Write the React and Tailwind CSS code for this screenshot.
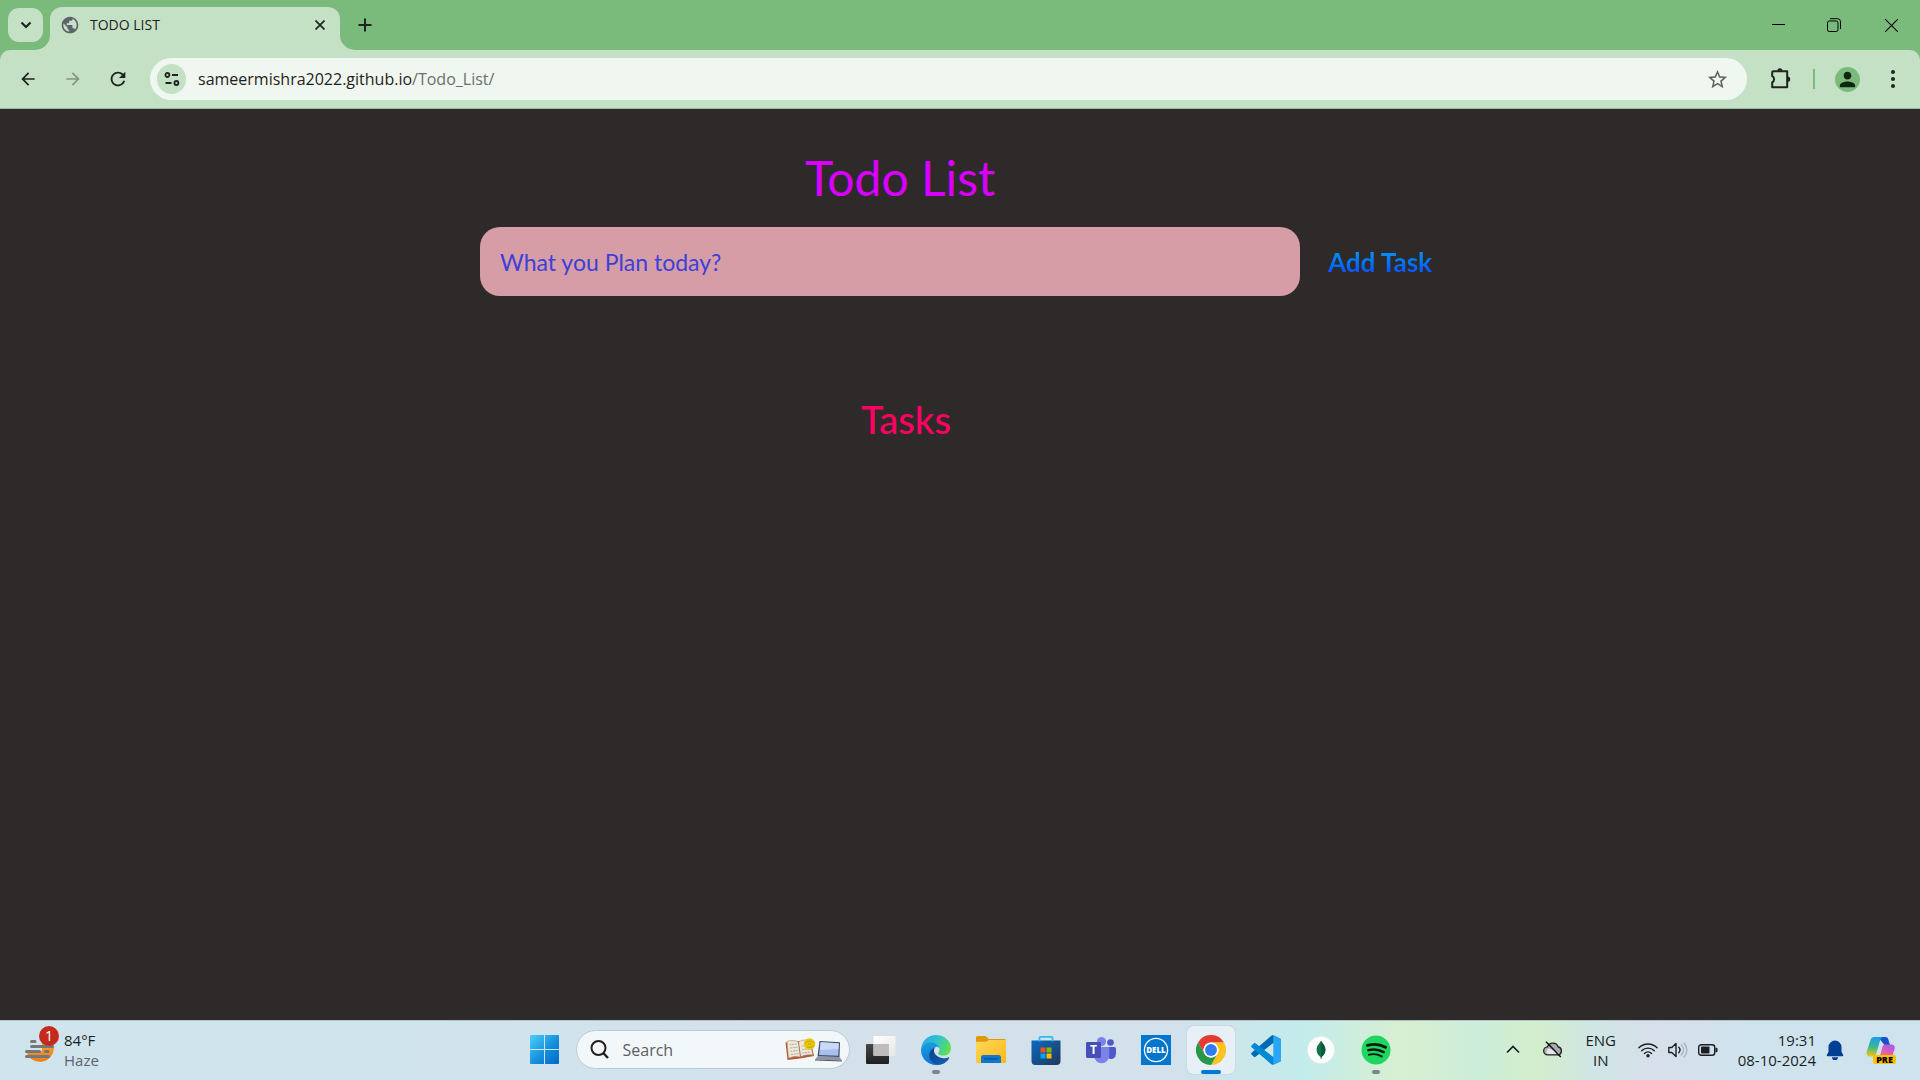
import React, { useState } from "react";
import { MdArrowBack, MdArrowForward, MdRefresh, MdPublic, MdPerson, MdStarBorder } from "react-icons/md";

const ui = "font-['Open_Sans','Noto_Sans',sans-serif]";

function TabCurve({ flip }) {
  return (
    <svg width="15" height="15" viewBox="0 0 15 15" className={flip ? "-scale-x-100 self-end" : "self-end"} aria-hidden="true">
      <path d="M0 15A15 15 0 0 0 15 0V15Z" fill="#c5e1c5" />
    </svg>
  );
}

function TabStrip() {
  return (
    <div className="flex h-[50px] items-stretch bg-[#7abb7c]">
      <button aria-label="Search tabs" className="mt-2 ml-2 flex h-[34px] w-[35px] items-center justify-center rounded-[11px] bg-[#c5e1c5]">
        <svg width="12" height="8" viewBox="0 0 12 8" fill="none" stroke="#1f2320" strokeWidth="2.2">
          <path d="M1.5 1.5 6 6l4.5-4.5" />
        </svg>
      </button>
      <div className="-ml-2 flex">
        <TabCurve />
        <div className="mt-[7px] flex w-[290px] items-center rounded-t-xl bg-[#c5e1c5] pr-2.5 pb-[7px] pl-2.5">
          <MdPublic size={20} color="#5d6368" />
          <span className="ml-2.5 flex-1 text-sm text-[#202124]">TODO LIST</span>
          <button aria-label="Close tab" className="flex h-5 w-5 items-center justify-center">
            <svg width="10" height="10" viewBox="0 0 10 10" stroke="#1f2320" strokeWidth="1.7">
              <path d="M.5.5l9 9M9.5.5l-9 9" />
            </svg>
          </button>
        </div>
        <TabCurve flip />
      </div>
      <button aria-label="New tab" className="flex w-5 items-center justify-center">
        <svg width="14" height="14" viewBox="0 0 14 14" stroke="#1f2320" strokeWidth="2">
          <path d="M7 .5v13M.5 7h13" />
        </svg>
      </button>
      <div className="ml-auto flex">
        <button aria-label="Minimize" className="flex w-14 items-center justify-center">
          <svg width="13" height="13" viewBox="0 0 13 13" stroke="#000" strokeWidth="1">
            <path d="M0 5.5h13" />
          </svg>
        </button>
        <button aria-label="Restore" className="flex w-14 items-center justify-center">
          <svg width="14" height="14" viewBox="0 0 14 14" fill="none" stroke="#000" strokeWidth="1">
            <rect x="0.5" y="3" width="10.5" height="10.5" rx="1.8" />
            <path d="M3 .7h7.5a3 3 0 0 1 3 3V11" />
          </svg>
        </button>
        <button aria-label="Close" className="flex w-[58px] items-center justify-center">
          <svg width="13" height="13" viewBox="0 0 13 13" stroke="#000" strokeWidth="1.1">
            <path d="M0 0l13 13M13 0 0 13" />
          </svg>
        </button>
      </div>
    </div>
  );
}

function Toolbar() {
  return (
    <div className="bg-[#7abb7c]">
      <div className="flex h-[59px] items-center rounded-t-[10px] border-b border-[#9db89d] bg-[#c5e1c5] pr-[17px] pl-[9px]">
        <button aria-label="Back" className="flex w-[37px] justify-center text-[#1f2320]"><MdArrowBack size={20} /></button>
        <button aria-label="Forward" className="ml-2 flex w-[37px] justify-center text-[#839784]"><MdArrowForward size={20} /></button>
        <button aria-label="Reload" className="ml-2 flex w-[37px] justify-center text-[#1f2320]"><MdRefresh size={22} /></button>
        <div className="ml-3.5 flex h-[42px] flex-1 items-center rounded-full bg-[#f0f7f0] pr-[18px] pl-[7px]">
          <button aria-label="Site information" className="flex h-[30px] w-[29px] shrink-0 items-center justify-center rounded-full bg-[#c5e1c5]">
            <svg width="16" height="14" viewBox="0 0 16 14" fill="none" stroke="#1f2320" strokeWidth="1.8">
              <circle cx="3.4" cy="3" r="2" />
              <path d="M8 3h6M1.5 11h6" />
              <circle cx="12.4" cy="11" r="2" />
            </svg>
          </button>
          <div className="ml-3 flex-1 text-base text-[#1f2320]">
            sameermishra2022.github.io<span className="text-[#6a706b]">/Todo_List/</span>
          </div>
          <button aria-label="Bookmark this tab" className="text-[#5c625d]"><MdStarBorder size={23} /></button>
        </div>
        <button aria-label="Extensions" className="ml-[23px]">
          <svg width="22" height="22" viewBox="0 0 22 22" aria-hidden="true">
            <path d="M3.2 3.2H17.2V19.2H2.2V14.3A3.4 3.4 0 0 0 2.2 8.2V4.2a1 1 0 0 1 1-1Z" fill="none" stroke="#1f2320" strokeWidth="2" strokeLinejoin="round" />
            <path d="M7.3 2.8a2.6 2.6 0 0 1 5.2 0ZM17.6 8.6a2.6 2.6 0 0 1 0 5.2Z" fill="#1f2320" />
          </svg>
        </button>
        <span className="ml-[21px] h-5 w-0.5 bg-[#7abb7c]" />
        <button aria-label="Profile" className="ml-5 flex h-[25px] w-[25px] items-center justify-center rounded-full bg-[#7abb7c] text-[#10250f]">
          <MdPerson size={23} />
        </button>
        <button aria-label="Menu" className="ml-[22px] flex w-[21px] justify-center">
          <svg width="4" height="18" viewBox="0 0 4 18" fill="#1f2320">
            <circle cx="2" cy="2" r="2" />
            <circle cx="2" cy="9" r="2" />
            <circle cx="2" cy="16" r="2" />
          </svg>
        </button>
      </div>
    </div>
  );
}

function TodoPage() {
  const [task, setTask] = useState("");
  return (
    <main className="flex-1 bg-[#2f2a2a] font-['Lato',sans-serif]">
      <div className="mx-auto w-1/2 pt-9">
        <h1 className="pr-[120px] text-center text-5xl leading-[66px] text-[#da00ff]">Todo List</h1>
        <form className="mt-4 flex items-center" onSubmit={(e) => e.preventDefault()}>
          <input
            aria-label="New task"
            value={task}
            onChange={(e) => setTask(e.target.value)}
            placeholder="What you Plan today?"
            className="h-[69px] min-w-0 flex-1 rounded-[20px] bg-[#d69da7] px-5 text-[23px] text-[#3c40d8] outline-none placeholder:text-[#3c40d8]"
          />
          <button type="submit" className="ml-7 bg-linear-to-b from-[#1a9ff5] to-[#1a3cff] bg-clip-text pr-2 text-[26px] leading-8 font-bold text-transparent">
            Add Task
          </button>
        </form>
        <h2 className="mt-[97px] pr-[108px] text-center text-[38px] leading-[52px] font-medium text-[#ff0062]">Tasks</h2>
      </div>
    </main>
  );
}

function TaskButton({ label, active, open, children }) {
  return (
    <button
      aria-label={label}
      className={
        active
          ? "relative flex h-12 w-12 items-center justify-center rounded-md bg-[#e8f0f7] shadow-[0_0_1px_#8899aa]"
          : "relative flex h-12 w-12 items-center justify-center"
      }
    >
      {children}
      {active && <span className="absolute bottom-0 left-3.5 h-1 w-5 rounded-full bg-[#0078d4]" />}
      {open && <span className="absolute bottom-0 left-5 h-1 w-2 rounded-full bg-[#7f8489]" />}
    </button>
  );
}

const TaskViewIcon = () => (
  <svg width="30" height="30" viewBox="0 0 30 30">
    <defs>
      <linearGradient id="tv" x1="0" y1="0" x2="0" y2="1"><stop stopColor="#474747" /><stop offset="1" stopColor="#1f1f1f" /></linearGradient>
      <linearGradient id="tw" x1="0" y1="0" x2="1" y2="1"><stop stopColor="#fff" /><stop offset="1" stopColor="#e4e6e8" /></linearGradient>
    </defs>
    <rect x="0" y="9" width="23" height="20" rx="1" fill="url(#tv)" />
    <rect x="7.5" y="1" width="22" height="20" rx="1" fill="url(#tw)" />
    <path d="M7.5 9H23V21H8.5a1 1 0 0 1-1-1Z" fill="#bdbdbd" />
  </svg>
);

const EdgeIcon = () => (
  <svg width="30" height="30" viewBox="0 0 30 30">
    <defs>
      <linearGradient id="ea" x1="0" y1=".2" x2="1" y2=".6"><stop stopColor="#2aa6e8" /><stop offset=".5" stopColor="#2fc5cb" /><stop offset="1" stopColor="#62e04c" /></linearGradient>
      <linearGradient id="eb" x1=".3" y1="0" x2=".5" y2="1"><stop stopColor="#1b9de2" /><stop offset="1" stopColor="#0a72d3" /></linearGradient>
      <linearGradient id="ec" x1="0" y1="0" x2="1" y2="1"><stop stopColor="#0d3f86" /><stop offset="1" stopColor="#1263b8" /></linearGradient>
    </defs>
    <path d="M.2 13.5C1 5.7 7.200 0 15 0c8.500 0 15 6.200 15 13 0 4.500-3.400 7.600-7.600 7.600-3.300 0-5.200-1-5.200-2.200 0-.9 1.300-1.600 1.300-3.800 0-3.400-3.400-6.600-8.500-6.600C5.300 8 1.800 10.300.2 13.500Z" fill="url(#ea)" />
    <path d="M.2 13.500C1.800 9.700 5.500 7.600 9.800 7.600c4.500 0 8 2.400 8.700 6-1-1.700-2.300-2.100-3.600-1.600-3 1.300-5 5-3.600 9.500 1.200 4 4.500 6.800 8.600 7.500C11 32.400 0 26 0 15Z" fill="url(#eb)" />
    <path d="M14.400 12.300C11.200 14 9 15.500 8.400 18.500 7.500 23 10.500 28.700 17 29.800c5 .1 9.200-3 11.200-6.900.3-.6-.2-.9-.7-.7-1.300.7-2.700 1-4.500 1-5.700 0-10-3.600-10-7.600 0-1.400.4-2.500 1.400-3.300Z" fill="url(#ec)" />
  </svg>
);

const FolderIcon = () => (
  <svg width="30" height="27" viewBox="0 0 30 27">
    <defs>
      <linearGradient id="fo" x1="0" y1="0" x2="1" y2="1"><stop stopColor="#ffd75e" /><stop offset="1" stopColor="#fcb912" /></linearGradient>
    </defs>
    <path d="M0 1.500A1.500 1.500 0 0 1 1.500 0h8l3.500 3h15.500A1.500 1.500 0 0 1 30 4.500V10H0Z" fill="#dd9a0b" />
    <path d="M0 5.800h10L13 4h17v21.500a1.500 1.500 0 0 1-1.500 1.500h-27A1.500 1.500 0 0 1 0 25.500Z" fill="url(#fo)" />
    <path d="M5 27v-5.500A2.500 2.500 0 0 1 7.500 19h15a2.500 2.500 0 0 1 2.500 2.500V27Z" fill="#0f78cc" />
    <path d="M8.500 22.800h13" stroke="#0a4c8c" strokeWidth="1.2" strokeLinecap="round" />
  </svg>
);

const StoreIcon = () => (
  <svg width="30" height="30" viewBox="0 0 30 30">
    <defs>
      <linearGradient id="st" x1="0" y1="0" x2="1" y2="1"><stop stopColor="#0a6bbf" /><stop offset="1" stopColor="#22365c" /></linearGradient>
    </defs>
    <path d="M.5 5.500h29V26a4 4 0 0 1-4 4h-21a4 4 0 0 1-4-4Z" fill="url(#st)" />
    <path d="M8.500 6.500V2.800a1 1 0 0 1 1-1h11a1 1 0 0 1 1 1V6.500" fill="none" stroke="#2bbdf2" strokeWidth="1.8" />
    <path fill="#f25022" d="M9.500 12.500h5v5h-5z" />
    <path fill="#7fba00" d="M15.500 12.500h5v5h-5z" />
    <path fill="#00a4ef" d="M9.500 18.500h5v5h-5z" />
    <path fill="#ffb900" d="M15.500 18.500h5v5h-5z" />
  </svg>
);

const TeamsIcon = () => (
  <svg width="30" height="30" viewBox="0 0 30 30">
    <circle cx="24.500" cy="7.500" r="3.300" fill="#5059c9" />
    <path d="M21 12h7.500a1.500 1.500 0 0 1 1.500 1.500V19a5 5 0 0 1-8 4Z" fill="#5059c9" />
    <circle cx="15.500" cy="6.500" r="4.500" fill="#7b83eb" />
    <path d="M8 12h14a1.300 1.300 0 0 1 1.300 1.300V20.500a7.600 7.600 0 0 1-15.300 0Z" fill="#7b83eb" />
    <rect x="0" y="7" width="15" height="16" rx="1.400" fill="#464eb8" />
    <text x="7.500" y="19" textAnchor="middle" fontSize="12" fontWeight="700" fill="#fff" fontFamily="Open Sans, sans-serif">T</text>
  </svg>
);

const DellIcon = () => (
  <svg width="30" height="30" viewBox="0 0 30 30">
    <rect width="30" height="30" fill="#0076ce" />
    <circle cx="15" cy="15" r="11.600" fill="none" stroke="#fff" strokeWidth="1.3" />
    <text x="15" y="17.800" textAnchor="middle" fontSize="8" fontWeight="800" fill="#fff" fontFamily="Open Sans, sans-serif">DELL</text>
  </svg>
);

const ChromeIcon = () => (
  <svg width="30" height="30" viewBox="0 0 48 48">
    <path d="M3.200 12A24 24 0 0 1 44.800 12L24 12A12 12 0 0 0 13.600 30Z" fill="#e33b2e" />
    <path d="M44.800 12A24 24 0 0 1 24 48L34.400 30A12 12 0 0 0 24 12Z" fill="#fcc31e" />
    <path d="M24 48A24 24 0 0 1 3.200 12L13.600 30A12 12 0 0 0 34.400 30Z" fill="#269848" />
    <circle cx="24" cy="24" r="12" fill="#fff" />
    <circle cx="24" cy="24" r="9.500" fill="#2f7df0" />
  </svg>
);

const CodeIcon = () => (
  <svg width="30" height="30" viewBox="0 0 30 30">
    <path d="M22 .3 29 3.400a1.700 1.700 0 0 1 1 1.600L21.600 8.600 4.500 21.800a1.200 1.200 0 0 1-1.600-.1L.6 19.600a1.200 1.200 0 0 1 0-1.800L20.300.7A1.700 1.700 0 0 1 22 .3Z" fill="#0069b4" />
    <path d="M22 29.700 29 26.600a1.700 1.700 0 0 0 1-1.600L21.600 21.400 4.500 8.200a1.200 1.200 0 0 0-1.600.1L.6 10.400a1.200 1.200 0 0 0 0 1.800L20.300 29.300A1.700 1.700 0 0 0 22 29.700Z" fill="#0089d4" />
    <path d="M22 29.700c.8.300 7-3 7-3a1.700 1.700 0 0 0 1-1.600V5a1.700 1.700 0 0 0-1-1.600S22.800 0 22 .3c-.5.2.3.3.3 1.300v26.800c0 1-.8 1.100-.3 1.300Z" fill="#29a7f2" />
  </svg>
);

const MongoIcon = () => (
  <svg width="28" height="28" viewBox="0 0 28 28">
    <circle cx="14" cy="14" r="13.700" fill="#fbfcfc" stroke="#dfe5e3" strokeWidth=".6" />
    <path d="M14 4.800c1.500 2.700 4.400 4.700 4.400 9 0 3.800-2.400 6-3.900 7.200L14.200 23h-.5L13.500 21C12 19.800 9.600 17.600 9.600 13.800c0-4.300 2.900-6.300 4.400-9Z" fill="#11734a" />
    <path d="M14 4.800c1.500 2.700 4.400 4.700 4.400 9 0 3.800-2.400 6-3.900 7.200L14.200 23H14Z" fill="#075a3a" />
  </svg>
);

const SpotifyIcon = () => (
  <svg width="30" height="30" viewBox="0 0 30 30" fill="none" strokeLinecap="round" stroke="#06180c">
    <circle cx="15" cy="15" r="14.500" fill="#1fd760" stroke="none" />
    <path d="M6.500 10.400c6-1.700 12.500-1.100 18 1.900" strokeWidth="2.900" />
    <path d="M7.300 15.200c5.200-1.400 10.600-.8 15.400 1.900" strokeWidth="2.400" />
    <path d="M7.900 19.700c4.400-1.100 8.700-.7 12.800 1.700" strokeWidth="1.9" />
  </svg>
);

const SearchArt = () => (
  <svg width="57" height="24" viewBox="0 0 57 24" aria-hidden="true">
    <path d="M.5 4.500 13 3l13 1.500L29 18l-14 2.500L2.500 22Z" fill="#b9552f" />
    <path d="M2 3.500C6 2 10 2 13.500 4 17 1.700 21 1.500 25 2.500L27.800 17c-5-.8-9 0-12.300 2-3-1-7.500-.8-12 1Z" fill="#efe8d8" stroke="#a29176" strokeWidth=".6" />
    <path d="M13.500 4 15.500 19" stroke="#8b7a60" strokeWidth="1" />
    <path d="M4.500 6.500 12 6M5 10l7.300-.7M5.300 13.300l7.500-.8M6 16.500l7.500-.9M16.500 8l6-.7M17 11.500l8-.8M17.400 15l8-.8" stroke="#aaa59b" strokeWidth=".9" strokeDasharray="2 .7" />
    <circle cx="24.500" cy="6" r="5.800" fill="#e8c80e" />
    <path d="M20.500 5.500c1.500-3 6-3 8-.5M22 9c2 1 5 .5 6.500-1.500M23 6h3" stroke="#c4a200" strokeWidth="1" fill="none" />
    <path d="M34.500 3 55 4.200 54.500 19 32.500 18.500Z" fill="#424a63" />
    <path d="M35.600 4.300 53.800 5.300 53.300 17.700 34 17Z" fill="#a9c0ef" />
    <path d="M35.600 4.300 53.800 5.300 53.500 11 35 12Z" fill="#c9d9f8" />
    <path d="M32.500 18.500 54.500 19 57 22.500 30 21.500Z" fill="#8f95a8" />
    <path d="M30 21.500 57 22.500V23.500L30 22.500Z" fill="#4f5466" />
  </svg>
);

function Taskbar() {
  return (
    <footer className="grid h-[60px] grid-cols-[1fr_auto_1fr] items-center border-t border-[#b5bfc6] bg-[linear-gradient(90deg,#d0e4ee_0%,#d0e4ee_22%,#d4e1eb_45%,#d2e1eb_61%,#c3ecec_68%,#d8efd0_73%,#ccedda_77%,#d3eecb_80%,#cfe6e6_83%,#d7dfea_86%,#cfe3ee_91%,#cfe3ee_100%)] pb-0.5 text-[15px] leading-5 text-[#1b1f22]">
      <button className="flex items-center justify-self-start pl-6 text-left">
        <span className="relative block h-10 w-10">
          <svg width="32" height="30" viewBox="0 0 32 30" className="mt-1" aria-hidden="true">
            <defs>
              <linearGradient id="sun" x1="0" y1="0" x2="0" y2="1"><stop stopColor="#f9b72c" /><stop offset="1" stopColor="#f07a1c" /></linearGradient>
            </defs>
            <path d="M2 14H17L18 0A14 14 0 1 1 2.500 18Z" fill="url(#sun)" />
            <path d="M0 0H18V17H0Z" fill="#d0e4ee" />
            <path d="M7.500 7.500h3.500M7.500 12.500h21M2.500 17.500h13M21.500 17.500h2.500M2.500 22.500h22" stroke="#75777a" strokeWidth="3" strokeLinecap="round" />
          </svg>
          <span className="absolute -top-1 left-[15px] flex h-5 w-5 items-center justify-center rounded-full bg-[#c42b1c] text-sm text-white">1</span>
        </span>
        <span>
          <span className="block">84°F</span>
          <span className="block text-[#5b6469]">Haze</span>
        </span>
      </button>

      <div className="flex items-center gap-[7px]">
        <TaskButton label="Start">
          <svg width="29" height="29" viewBox="0 0 29 29">
            <defs>
              <linearGradient id="win" gradientUnits="userSpaceOnUse" x1="0" y1="0" x2="29" y2="29"><stop stopColor="#4cd0fb" /><stop offset=".55" stopColor="#1590dd" /><stop offset="1" stopColor="#0067c8" /></linearGradient>
            </defs>
            <path d="M1 0h13v14H0V1a1 1 0 0 1 1-1ZM15 0h13a1 1 0 0 1 1 1v13H15ZM0 15h14v14H1a1 1 0 0 1-1-1ZM15 15h14v13a1 1 0 0 1-1 1H15Z" fill="url(#win)" />
          </svg>
        </TaskButton>
        <label className="flex h-[39px] w-[274px] items-center rounded-full border border-[#bccbd4] bg-[#f2f7fa] pr-[7px] pl-[13px]">
          <svg width="19" height="19" viewBox="0 0 19 19" fill="none" stroke="#202020" strokeWidth="2" className="shrink-0" aria-hidden="true">
            <circle cx="8.500" cy="8" r="7" />
            <path d="M13.500 13.200 18 18" strokeWidth="2.4" />
          </svg>
          <input aria-label="Search" placeholder="Search" className="ml-3.5 min-w-0 flex-1 bg-transparent text-base outline-none placeholder:text-[#5a6064]" />
          <SearchArt />
        </label>
        <TaskButton label="Task view"><TaskViewIcon /></TaskButton>
        <TaskButton label="Microsoft Edge" open><EdgeIcon /></TaskButton>
        <TaskButton label="File Explorer"><FolderIcon /></TaskButton>
        <TaskButton label="Microsoft Store"><StoreIcon /></TaskButton>
        <TaskButton label="Microsoft Teams"><TeamsIcon /></TaskButton>
        <TaskButton label="Dell"><DellIcon /></TaskButton>
        <TaskButton label="Google Chrome" active><ChromeIcon /></TaskButton>
        <TaskButton label="Visual Studio Code"><CodeIcon /></TaskButton>
        <TaskButton label="MongoDB Compass"><MongoIcon /></TaskButton>
        <TaskButton label="Spotify" open><SpotifyIcon /></TaskButton>
      </div>

      <div className="flex items-center justify-self-end pr-6">
        <button aria-label="Show hidden icons">
          <svg width="14" height="9" viewBox="0 0 14 9" fill="none" stroke="#1b1f22" strokeWidth="1.7"><path d="M1 7.500 7 1.500l6 6" /></svg>
        </button>
        <button aria-label="OneDrive" className="ml-[23px]">
          <svg width="20" height="17" viewBox="0 0 20 17">
            <path d="M4.800 13.800a4 4 0 0 1-.3-8A5.800 5.800 0 0 1 15.300 6a4 4 0 0 1 0 7.800Z" fill="#a9acae" stroke="#222" strokeWidth="1.3" />
            <path d="M4.800 13a3 3 0 0 1 1-5.500l5 1.500 6 3.500-1.500.6Z" fill="#e4e6e8" />
            <path d="M3 .8 17.800 16" stroke="#111" strokeWidth="1.5" />
          </svg>
        </button>
        <button className="ml-[22px] w-8 text-center">
          <span className="block">ENG</span>
          <span className="block">IN</span>
        </button>
        <button aria-label="Network, volume and battery" className="ml-[21px] flex items-center gap-2.5">
          <svg width="20" height="16" viewBox="0 0 20 16" fill="none" stroke="#1b1f22" strokeWidth="1.4" strokeLinecap="round">
            <path d="M.9 5.800a12.700 12.700 0 0 1 18.200 0M3.700 8.800a8.800 8.800 0 0 1 12.600 0M6.500 11.500a5 5 0 0 1 7 0" />
            <circle cx="10" cy="13.700" r="1.700" fill="#1b1f22" stroke="none" />
          </svg>
          <svg width="20" height="16" viewBox="0 0 20 16" fill="none" stroke="#1b1f22" strokeWidth="1.4" strokeLinecap="round">
            <path d="M.8 5.500h3L8 1.500v13l-4.200-4h-3Z" strokeLinejoin="round" />
            <path d="M10.800 5.300a4 4 0 0 1 0 5.400" />
            <path d="M13.400 3a7 7 0 0 1 0 10M16 1a10 10 0 0 1 0 14" stroke="#a9b6bd" />
          </svg>
          <svg width="20" height="12" viewBox="0 0 20 12">
            <rect x=".7" y=".7" width="16" height="10.600" rx="2.500" fill="none" stroke="#1b1f22" strokeWidth="1.4" />
            <rect x="3" y="2.500" width="8.500" height="7" rx=".8" fill="#1b1f22" />
            <path d="M17.500 3.800h1a1 1 0 0 1 1 1v2.400a1 1 0 0 1-1 1h-1Z" fill="#1b1f22" />
          </svg>
        </button>
        <button className="ml-5 text-right">
          <span className="block">19:31</span>
          <span className="block">08-10-2024</span>
        </button>
        <button aria-label="Notifications" className="ml-2.5">
          <svg width="18" height="20" viewBox="0 0 18 20" fill="#003f91">
            <path d="M9 .5a6.500 6.500 0 0 1 6.500 6.500v4.800L17.200 15a.8.8 0 0 1-.7 1.200h-15A.8.8 0 0 1 .8 15l1.700-3.200V7A6.500 6.500 0 0 1 9 .5ZM6 17.300h6a3 3 0 0 1-6 0Z" />
          </svg>
        </button>
        <button aria-label="Copilot preview" className="relative ml-[22px] h-7 w-[30px]">
          <svg width="30" height="26" viewBox="0 0 30 26">
            <defs>
              <linearGradient id="ca" x1=".3" y1="0" x2=".2" y2="1"><stop stopColor="#1a9df0" /><stop offset=".5" stopColor="#3fb889" /><stop offset="1" stopColor="#f2c80f" /></linearGradient>
              <linearGradient id="cb" x1=".8" y1="0" x2=".3" y2="1"><stop stopColor="#a35cf0" /><stop offset=".5" stopColor="#d95bc0" /><stop offset="1" stopColor="#f77a5a" /></linearGradient>
            </defs>
            <path d="M12 0h7.500a3 3 0 0 1 2.800 2.200L24 8h-5.500Z" fill="#1752c9" />
            <path d="M8 0h9.500c-2 0-2.800 1.500-3.300 3.200L10 17.500C9.500 19 8.500 19.500 7 19.500H4c-3 0-4-2.500-3.200-5L4.500 3C5.200 1 6.200 0 8 0Z" fill="url(#ca)" />
            <path d="M18 7.500h7.500c2.800 0 3.800 2.300 3 5L26 20H12c1.500 0 2-1.500 2.500-3l2-7.500Z" fill="url(#cb)" />
          </svg>
          <span className="absolute top-[19px] left-[7px] flex h-[9px] w-[23px] items-center justify-center rounded-xs bg-[#ffc200] text-[9px] leading-[9px] font-extrabold text-black">PRE</span>
        </button>
      </div>
    </footer>
  );
}

export default function App() {
  return (
    <div className={`flex min-h-screen flex-col ${ui}`}>
      <header>
        <TabStrip />
        <Toolbar />
      </header>
      <TodoPage />
      <Taskbar />
    </div>
  );
}
